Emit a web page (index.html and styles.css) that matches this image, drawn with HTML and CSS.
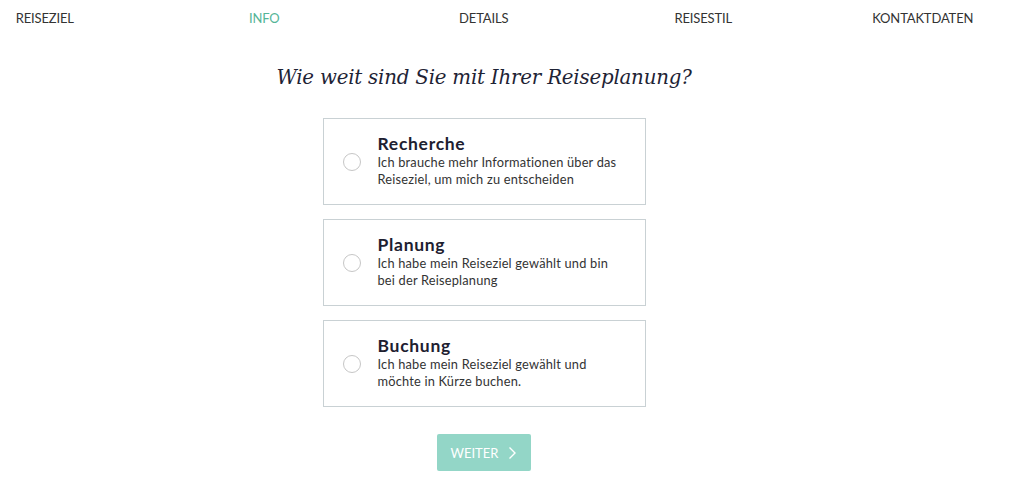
FILE: index.html
```html
<!DOCTYPE html>
<html lang="de">
<head>
<meta charset="utf-8">
<title>Reiseplanung</title>
<link rel="stylesheet" href="styles.css">
</head>
<body>
<div class="page">
  <nav class="steps">
    <span class="step">REISEZIEL</span>
    <span class="step active">INFO</span>
    <span class="step">DETAILS</span>
    <span class="step">REISESTIL</span>
    <span class="step">KONTAKTDATEN</span>
  </nav>
  <main class="content">
    <h1 class="question">Wie weit sind Sie mit Ihrer Reiseplanung?</h1>
    <div class="options">
      <label class="option">
        <span class="radio"></span>
        <span class="text">
          <span class="title">Recherche</span>
          <span class="desc">Ich brauche mehr Informationen über das Reiseziel, um mich zu entscheiden</span>
        </span>
      </label>
      <label class="option">
        <span class="radio"></span>
        <span class="text">
          <span class="title">Planung</span>
          <span class="desc">Ich habe mein Reiseziel gewählt und bin bei der Reiseplanung</span>
        </span>
      </label>
      <label class="option">
        <span class="radio"></span>
        <span class="text">
          <span class="title">Buchung</span>
          <span class="desc">Ich habe mein Reiseziel gewählt und möchte in Kürze buchen.</span>
        </span>
      </label>
    </div>
    <button class="next" type="button">WEITER
      <svg class="chev" width="9" height="14" viewBox="0 0 9 14"><path d="M1.5 1.5 L7 7 L1.5 12.5" fill="none" stroke="#fff" stroke-width="1.4"/></svg>
    </button>
  </main>
</div>
</body>
</html>
```
FILE: styles.css
```css
html, body {
  margin: 0;
  padding: 0;
  background: #fff;
  overflow: hidden;
}
body {
  font-family: "Lato", "Open Sans", sans-serif;
  color: #333;
}
.page {
  width: 968px;
}
.steps {
  display: grid;
  grid-template-columns: repeat(5, 219.5px);
  margin-left: -65px;
  padding-top: 10px;
  height: 16px;
  font-size: 13px;
  letter-spacing: -0.15px;
  color: #333;
}
.step {
  text-align: center;
}
.step.active {
  color: #55b597;
}
.content {
  display: flex;
  flex-direction: column;
  align-items: center;
}
.question {
  margin: 39px 0 0;
  font-family: "DejaVu Serif", serif;
  font-style: italic;
  font-weight: normal;
  font-size: 19.8px;
  line-height: 26px;
  color: #1e2335;
  letter-spacing: -0.2px;
}
.options {
  margin-top: 27px;
  display: flex;
  flex-direction: column;
  gap: 14px;
}
.option {
  box-sizing: border-box;
  width: 323px;
  height: 87px;
  border: 1.5px solid #c9d1d4;
  display: flex;
  align-items: center;
  padding-left: 19px;
  cursor: pointer;
}
.radio {
  box-sizing: border-box;
  width: 18px;
  height: 18px;
  border-radius: 50%;
  border: 1.5px solid #c6c6c6;
  flex: none;
}
.text {
  display: flex;
  flex-direction: column;
  margin-left: 17px;
  margin-top: -2px;
}
.title {
  font-size: 17.5px;
  font-weight: 700;
  color: #1d2030;
  line-height: 21px;
  letter-spacing: 0.7px;
}
.desc {
  font-size: 12.8px;
  line-height: 17px;
  color: #333;
  width: 250px;
  letter-spacing: 0.2px;
}
.next {
  margin-top: 27px;
  width: 94px;
  height: 37px;
  border: none;
  border-radius: 2px;
  background: #93d6c7;
  color: #fff;
  font-family: "Lato", sans-serif;
  font-size: 13px;
  display: flex;
  align-items: center;
  justify-content: center;
  gap: 10px;
  padding: 0;
}
.chev {
  display: block;
}
```
